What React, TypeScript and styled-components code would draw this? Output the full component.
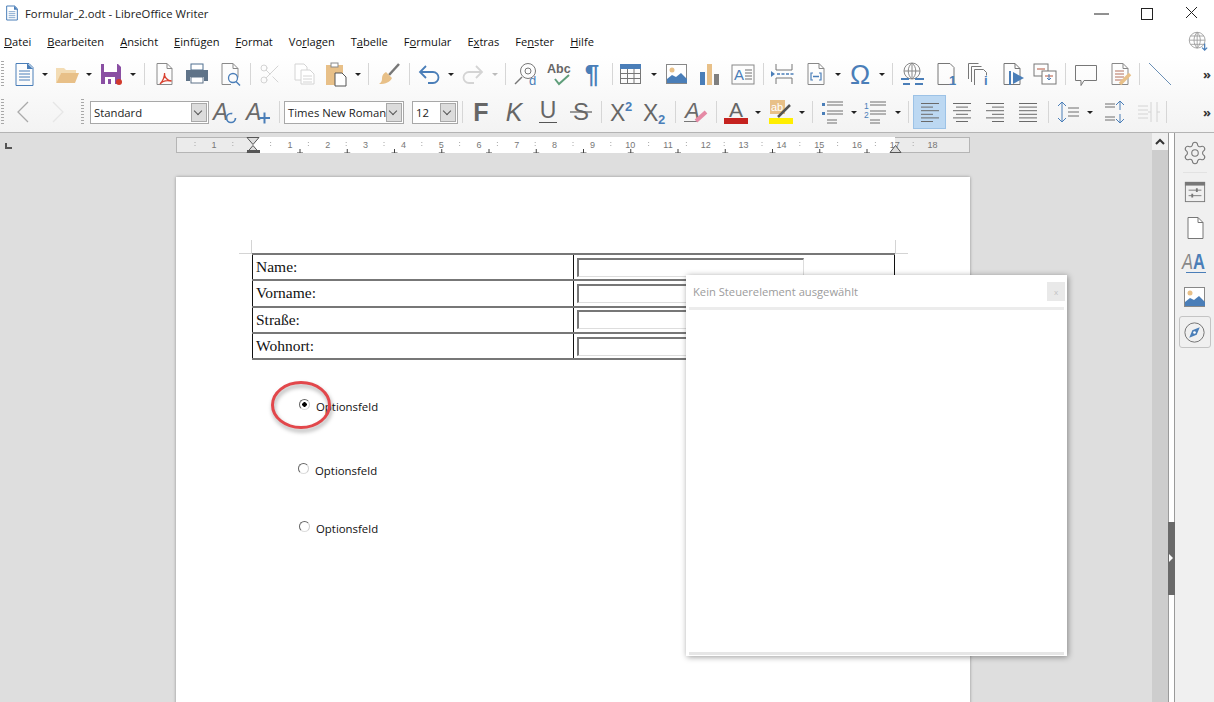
import React from "react";
import styled, { createGlobalStyle } from "styled-components";
import { Settings, Scissors } from "lucide-react";

const BLUE = "#4a7eb8";
const GREY = "#6f6f6f";
const TAN = "#e8c088";
const PALE = "#d4d4d4";

const Global = createGlobalStyle`
html, body { margin: 0; padding: 0; background: #fff; }
body { font-family: "Open Sans", "Noto Sans", sans-serif; }
`;

const Ico = styled.svg.attrs<{ $s?: number }>((p) => ({
    viewBox: "0 0 24 24",
    width: p.$s || 24,
    height: p.$s || 24,
    fill: "none",
    stroke: GREY,
    strokeWidth: 1,
}))<{ $s?: number }>`
display: block;
flex: none;
overflow: visible;
font-family: "Liberation Sans", sans-serif;
`;

const Lines = ({ x, y, w, n, gap = 3, color = GREY }: { x: number; y: number; w: number; n: number; gap?: number; color?: string }) => (
    <path stroke={color} d={Array.from({ length: n }, (_, i) => `M${x} ${y + i * gap}h${w}`).join("")} />
);

const NewDoc = () => (
    <Ico>
        <path stroke={BLUE} d="M4 1.500h13l4 4v18H4z" />
        <path fill={BLUE} stroke="none" d="M15 1l6 6h-6z" />
        <Lines x={7} y={9} w={11} n={4} color={BLUE} />
    </Ico>
);
const Folder = () => (
    <Ico>
        <path fill="#f3dcb4" stroke="none" d="M1 21V6h8l2 2h10v3H6L3 21z" />
        <path fill={TAN} stroke="none" d="M6 11h18l-4 10H1.500z" />
    </Ico>
);
const Save = () => (
    <Ico>
        <path fill="#8a4fa3" stroke="none" d="M2 2h17l3 3v17H2z" />
        <rect x="5" y="2" width="13" height="8" fill="#fff" stroke="none" />
        <rect x="6" y="15" width="10" height="7" fill="#fff" stroke="none" />
        <rect x="9" y="17" width="3" height="5" fill="#8a4fa3" stroke="none" />
        <circle cx="20" cy="20" r="3" fill="#d23a2c" stroke="none" />
    </Ico>
);
const Pdf = () => (
    <Ico>
        <path d="M5 1.500h10l5 5v16H5z" stroke="#8a8a8a" />
        <path d="M15 1.500v5h5" stroke="#8a8a8a" />
        <path stroke="#d9402f" strokeWidth="1.300" d="M8 22c3-3 5-8 4.500-11-.5 4 3 8 7 8-4-1-9 0-11.500 3z" />
    </Ico>
);
const Printer = () => (
    <Ico>
        <rect x="6" y="2" width="12" height="6" fill="#fff" stroke="#4f6f8f" />
        <path fill="#5f7388" stroke="none" d="M1 8h22v11h-4v-4H5v4H1z" />
        <rect x="6" y="15" width="12" height="6" fill="#fff" stroke="#5f7388" />
    </Ico>
);
const Preview = () => (
    <Ico>
        <path stroke="#8a8a8a" d="M4 1.500h11l5 5v9M13 22.500H4v-21M15 1.500v5h5" />
        <circle cx="15" cy="16" r="4.500" stroke={BLUE} strokeWidth="1.300" />
        <path stroke={BLUE} strokeWidth="1.500" d="M18 19.500l4 4" />
    </Ico>
);
const Copy = () => (
    <Ico>
        <path stroke={PALE} fill="#fff" d="M3 2h9l3 3v13H3z" />
        <path stroke={PALE} fill="#fff" d="M9 8h9l4 4v10H9z" />
        <Lines x={11} y={14} w={9} n={3} color={PALE} />
    </Ico>
);
const Paste = () => (
    <Ico>
        <rect x="2" y="3" width="17" height="20" fill={TAN} stroke="none" />
        <rect x="7" y="1" width="7" height="4" fill="#fff" stroke="#8a8a8a" />
        <path fill="#fff" stroke="#555" d="M11 11h7l4 4v9H11z" />
    </Ico>
);
const Broom = () => (
    <Ico>
        <path stroke="#777" strokeWidth="2.500" d="M22 2L12 13" />
        <path fill={TAN} stroke="none" d="M9 10l6 6c-2 4-6 6-13 6 3-2 3-4 3-6 0-3 2-5 4-6z" />
    </Ico>
);
const Undo = ({ off }: { off?: boolean }) => (
    <Ico>
        <path
            stroke={off ? PALE : BLUE}
            strokeWidth="1.800"
            d={off ? "M15 4l6 6-6 6M21 10H8a4.500 4.500 0 0 0 0 11h5" : "M9 4L3 10l6 6M3 10h13a4.500 4.500 0 0 1 0 11h-5"}
        />
    </Ico>
);
const Find = () => (
    <Ico>
        <circle cx="14" cy="9" r="7.500" stroke="#777" />
        <circle cx="14" cy="9" r="3" stroke="#777" />
        <path stroke="#777" strokeWidth="1.500" d="M8 15l-7 7" />
        <text x="15" y="23" fontSize="13" fill={BLUE} stroke="none">d</text>
    </Ico>
);
const Spell = () => (
    <Ico>
        <text x="0" y="11" fontSize="12.500" fontWeight="700" fill="#666" stroke="none">Abc</text>
        <path stroke="#5f9e7a" strokeWidth="2" d="M8 17l4 5 10-9" />
    </Ico>
);
const Pilcrow = () => (
    <Ico>
        <text x="12" y="21" textAnchor="middle" fontSize="26" fontWeight="700" fill={BLUE} stroke="none">¶</text>
    </Ico>
);
const TableIco = () => (
    <Ico>
        <rect x="1.500" y="2.500" width="20" height="19" stroke="#777" />
        <rect x="1" y="2" width="21" height="5" fill={BLUE} stroke="none" />
        <path stroke="#777" d="M1.500 11.500h20M1.500 16.500h20M8.500 7v14M15 7v14" />
    </Ico>
);
const Picture = () => (
    <Ico>
        <rect x="1.500" y="2.500" width="20" height="19" stroke="#888" fill="#fff" />
        <circle cx="7" cy="8" r="2.500" fill={TAN} stroke="none" />
        <path fill={BLUE} stroke="none" d="M2 21v-4l5-4 4 2 5-4 6 6v4z" />
    </Ico>
);
const Chart = () => (
    <Ico>
        <rect x="2" y="10" width="5" height="13" fill={BLUE} stroke="none" />
        <rect x="9" y="2" width="5" height="21" fill={TAN} stroke="none" />
        <rect x="16" y="12" width="5" height="11" fill="#808080" stroke="none" />
    </Ico>
);
const TextBox = () => (
    <Ico>
        <rect x="1" y="3" width="22" height="19" stroke="#888" />
        <text x="3" y="18" fontSize="15" fill={BLUE} stroke="none">A</text>
        <Lines x={14} y={8} w={7} n={4} />
    </Ico>
);
const PageBreak = () => (
    <Ico>
        <path stroke="#777" d="M5 2v6h16V2M5 22v-6h16v6" />
        <path stroke={BLUE} strokeWidth="1.500" strokeDasharray="3 1.500" d="M6 12h18" />
        <path fill={BLUE} stroke="none" d="M0 9l4 3-4 3z" />
    </Ico>
);
const FieldIco = () => (
    <Ico>
        <path stroke="#888" d="M4 1.500h11l5 5v16H4zM15 1.500v5h5" />
        <path stroke={BLUE} strokeWidth="1.200" d="M9 11H7v7h2M15 11h2v7h-2" />
        <path stroke={BLUE} strokeWidth="1.500" d="M9 14.500h6" />
    </Ico>
);
const Omega = () => (
    <Ico>
        <text x="12" y="22" textAnchor="middle" fontSize="27" fill={BLUE} stroke="none">Ω</text>
    </Ico>
);
const Hyperlink = () => (
    <Ico>
        <circle cx="11" cy="9" r="8" stroke="#888" />
        <path stroke="#888" d="M3 9h16M11 1v16M11 1c-5 4-5 12 0 16M11 1c5 4 5 12 0 16" />
        <path stroke={BLUE} strokeWidth="2" d="M0 17h8M14 17h9M2 22h7M14 22h8" />
    </Ico>
);
const Footnote = () => (
    <Ico>
        <path stroke="#777" d="M3 1.500h12l4 4v17H3z" />
        <text x="14" y="23" fontSize="13" fontWeight="700" fill={BLUE} stroke="none">1</text>
    </Ico>
);
const Endnote = () => (
    <Ico>
        <path stroke="#777" d="M1.500 17V1.500h10M4.500 20V4.500h10M7.500 23V7.500h9l3 3v3" />
        <text x="17" y="23" fontSize="13" fontWeight="700" fill={BLUE} stroke="none">i</text>
    </Ico>
);
const Bookmark = () => (
    <Ico>
        <path stroke="#777" d="M3 1.500h11l5 5v16H3zM14 1.500v5h5" />
        <path stroke={BLUE} strokeWidth="2" d="M9 9v14" />
        <path fill={BLUE} stroke="none" d="M12 10l11 6-11 6z" />
    </Ico>
);
const CrossRef = () => (
    <Ico>
        <rect x="1" y="2" width="14" height="12" stroke="#777" />
        <rect x="9" y="9" width="14" height="13" fill="#fff" stroke="#777" />
        <path stroke="#b5543c" d="M4 7h8M12 14h8" />
        <path stroke={BLUE} d="M16 12v6l-2-2M16 18l2-2" />
    </Ico>
);
const Comment = () => (
    <Ico>
        <path stroke="#777" d="M1.500 3.500h21v15H10l-3 5v-5H1.500z" />
    </Ico>
);
const Track = () => (
    <Ico>
        <path stroke="#888" d="M4 1.500h11l5 5v16H4zM15 1.500v5h5" />
        <Lines x={7} y={9} w={9} n={4} color="#b5705c" />
        <path stroke={TAN} strokeWidth="3.500" d="M12 22l10-10" />
    </Ico>
);
const LineIco = () => (
    <Ico>
        <path stroke="#6a8fb5" d="M1 1l22 22" />
    </Ico>
);
const Chevron = ({ off }: { off?: boolean }) => (
    <Ico>
        <path stroke={off ? "#e6e6e6" : "#aaa"} strokeWidth="1.300" d={off ? "M8 2l10 10L8 22" : "M16 2L6 12l10 10"} />
    </Ico>
);
const StyleA = () => (
    <Ico>
        <text x="-1" y="20" fontSize="23" fontStyle="italic" fill="#6a6a6a" stroke="none">A</text>
        <circle cx="17" cy="18" r="4.500" stroke={BLUE} strokeWidth="1.700" strokeDasharray="22 6" />
    </Ico>
);
const StyleNew = () => (
    <Ico>
        <text x="-1" y="20" fontSize="23" fontStyle="italic" fill="#6a6a6a" stroke="none">A</text>
        <path stroke={BLUE} strokeWidth="2" d="M12 18h11M17.500 12.500v11" />
    </Ico>
);
const Glyph = ({ t: label, italic, bold }: { t: string; italic?: boolean; bold?: boolean }) => (
    <Ico>
        <text x="12" y="21" textAnchor="middle" fontSize="25" fontStyle={italic ? "italic" : "normal"} fontWeight={bold ? 700 : 400} fill="#666" stroke="none">{label}</text>
    </Ico>
);
const Under = () => (
    <Ico>
        <text x="12" y="18" textAnchor="middle" fontSize="23" fill="#666" stroke="none">U</text>
        <path stroke="#555" d="M3 22.500h18" />
    </Ico>
);
const Strike = () => (
    <Ico>
        <text x="12" y="20" textAnchor="middle" fontSize="24" fill="#666" stroke="none">S</text>
        <path stroke="#666" strokeWidth="1.300" d="M1 12h22" />
    </Ico>
);
const Script = ({ up }: { up?: boolean }) => (
    <Ico>
        <text x="0" y="21" fontSize="23" fill="#666" stroke="none">X</text>
        <text x="15" y={up ? 11 : 24} fontSize="13" fontWeight="700" fill={BLUE} stroke="none">2</text>
    </Ico>
);
const ClearFmt = () => (
    <Ico>
        <text x="1" y="18" fontSize="22" fontStyle="italic" fill="#6a6a6a" stroke="none">A</text>
        <path stroke="#777" d="M0 21.500h14" />
        <path stroke="#e58aa5" strokeWidth="4" d="M12 21l10-9" />
    </Ico>
);
const FontColor = () => (
    <Ico>
        <text x="12" y="17" textAnchor="middle" fontSize="21" fill="#666" stroke="none">A</text>
        <rect x="0" y="18" width="24" height="6" fill="#c5221f" stroke="none" />
    </Ico>
);
const Highlight = () => (
    <Ico>
        <rect x="1" y="0" width="15" height="14" fill={TAN} stroke="none" />
        <text x="2" y="11" fontSize="11" fill="#fff" stroke="none">ab</text>
        <path stroke="#555" strokeWidth="2.500" d="M9 17l12-12" />
        <rect x="0" y="18" width="24" height="6" fill="#ffee00" stroke="none" />
    </Ico>
);
const Bullets = () => (
    <Ico>
        <path fill={BLUE} stroke="none" d="M1 3h3v3H1zM1 12h3v3H1z" />
        <Lines x={6} y={2} w={16} n={2} gap={3} />
        <Lines x={6} y={11} w={16} n={2} gap={3} />
        <Lines x={6} y={20} w={10} n={2} gap={3} />
    </Ico>
);
const Numbers = () => (
    <Ico>
        <text x="0" y="9" fontSize="8.500" fill={BLUE} stroke="none">1</text>
        <text x="0" y="18" fontSize="8.500" fill={BLUE} stroke="none">2</text>
        <Lines x={6} y={2} w={16} n={2} gap={3} />
        <Lines x={6} y={11} w={16} n={2} gap={3} />
        <Lines x={6} y={20} w={10} n={2} gap={3} />
    </Ico>
);
const Align = ({ kind }: { kind: "l" | "c" | "r" | "j" }) => {
    const rows = [18, 12, 18, 12, 18, 12];
    return (
        <Ico>
            <path
                stroke="#6a6a6a"
                d={rows
                    .map((w, i) => {
                        const len = kind === "j" ? 18 : w;
                        const x = kind === "l" || kind === "j" ? 3 : kind === "c" ? 12 - len / 2 : 21 - len;
                        return `M${x} ${3.5 + i * 3.6}h${len}`;
                    })
                    .join("")}
            />
        </Ico>
    );
};
const Spacing = () => (
    <Ico>
        <path stroke={BLUE} d="M6 2v20M2 6l4-4 4 4M2 18l4 4 4-4" />
        <Lines x={12} y={8} w={11} n={3} gap={4} />
    </Ico>
);
const ParaSpace = () => (
    <Ico>
        <path stroke={BLUE} d="M17 1v9M13 5l4-4 4 4M17 14v9M13 19l4 4 4-4" />
        <Lines x={2} y={4} w={10} n={2} gap={3} />
        <Lines x={2} y={17} w={10} n={2} gap={3} />
    </Ico>
);
const ParaOff = () => (
    <Ico>
        <Lines x={2} y={6} w={10} n={4} gap={4} color={PALE} />
        <path stroke={PALE} d="M15 2v20M21 2v20M12 12h3M24 12h-3" />
    </Ico>
);
const WebGlobe = () => (
    <Ico $s={20}>
        <circle cx="11" cy="11" r="9.500" stroke="#999" />
        <path stroke="#999" d="M1.500 11h19M11 1.500v19M11 1.500c-5 5-5 14 0 19M11 1.500c5 5 5 14 0 19M3 6h16M3 16h16" />
        <path stroke={BLUE} strokeWidth="1.500" d="M20 15v8M17 20l3 3 3-3" />
    </Ico>
);
const Deck = () => (
    <Ico $s={22}>
        <rect x="1.500" y="1.500" width="21" height="21" stroke="#777" />
        <rect x="1" y="1" width="22" height="4" fill="#777" stroke="none" />
        <path stroke="#777" d="M5 10h14M5 16h14" />
        <path stroke="#777" strokeWidth="2" d="M14 8v4M9 14v4" />
    </Ico>
);
const PageIco = () => (
    <Ico>
        <path stroke="#777" fill="#fff" d="M5 1.500h10l5 5v16H5z" />
        <path stroke="#777" d="M15 1.500v5h5" />
    </Ico>
);
const StyleSide = () => (
    <Ico>
        <text transform="translate(-1 19) scale(.75 1)" fontSize="22" fontStyle="italic" fill="#888" stroke="none">A</text>
        <text transform="translate(10 19) scale(.75 1)" fontSize="22" fontWeight="700" fill={BLUE} stroke="none">A</text>
        <path stroke={BLUE} d="M3 22.500h20" />
    </Ico>
);
const CompassIco = () => (
    <Ico $s={21}>
        <circle cx="12" cy="12" r="11" stroke="#666" />
        <path fill={BLUE} stroke="none" d="M18 6l-3.500 8.500L6 18l3.500-8.500z" />
        <circle cx="12" cy="12" r="1.500" fill="#fff" stroke="none" />
    </Ico>
);
const DocLogo = () => (
    <Ico $s={16}>
        <path stroke={BLUE} strokeWidth="1.500" fill="#fff" d="M4 1.500h12l4 4v17H4z" />
        <path fill={BLUE} stroke="none" d="M15 1l6 6h-6z" />
        <Lines x={7} y={10} w={10} n={4} color={BLUE} />
    </Ico>
);

type Item = { c: number; w: number; el: React.ReactNode };

// gap before each item comes from the centre of the one before it
const ToolRow = ({ items }: { items: Item[] }) => (
    <>
        {items.map((it, i) => {
            const prev = items[i - 1];
            const gap = prev ? it.c - prev.c - (it.w + prev.w) / 2 : it.c - it.w / 2;
            return (
                <Slot key={i} $w={it.w} $gap={gap}>
                    {it.el}
                </Slot>
            );
        })}
    </>
);

const t = (c: number, el: React.ReactNode, w = 24): Item => ({ c, w, el });
const dd = (c: number, off?: boolean): Item => ({ c, w: 6, el: <Caret $off={off} /> });
const sep = (c: number): Item => ({ c, w: 1, el: <Sep /> });
const more = (c: number): Item => ({ c, w: 12, el: <More>»</More> });

const bar1 = (): Item[] => [
    t(2, <Grip />, 3),
    t(24, <NewDoc />),
    dd(45),
    t(67, <Folder />),
    dd(89),
    t(111, <Save />),
    dd(133),
    sep(144),
    t(164, <Pdf />),
    t(197, <Printer />),
    t(230, <Preview />),
    sep(250),
    t(270, <Scissors size={24} color={PALE} strokeWidth={1} />),
    t(304, <Copy />),
    t(336, <Paste />),
    dd(358),
    sep(368),
    t(389, <Broom />),
    sep(409),
    t(429, <Undo />),
    dd(451),
    t(473, <Undo off />),
    dd(495, true),
    sep(505),
    t(526, <Find />),
    t(559, <Spell />),
    t(592, <Pilcrow />),
    sep(612),
    t(631, <TableIco />),
    dd(654),
    t(677, <Picture />),
    t(710, <Chart />),
    t(743, <TextBox />),
    sep(763),
    t(783, <PageBreak />),
    t(816, <FieldIco />),
    dd(838),
    t(860, <Omega />),
    dd(882),
    sep(892),
    t(913, <Hyperlink />),
    t(947, <Footnote />),
    t(979, <Endnote />),
    t(1013, <Bookmark />),
    t(1045, <CrossRef />),
    sep(1065),
    t(1086, <Comment />),
    t(1120, <Track />),
    sep(1139),
    t(1160, <LineIco />),
    more(1207),
];

const bar2 = (): Item[] => [
    t(2, <Grip />, 3),
    t(24, <Chevron />),
    t(57, <Chevron off />),
    t(82, <Grip />, 3),
    t(149.5, <Combo $w={119}><span>Standard</span><ComboBtn /></Combo>, 119),
    t(226, <StyleA />),
    t(259, <StyleNew />),
    sep(279),
    t(344, <Combo $w={120}><span>Times New Roman</span><ComboBtn /></Combo>, 120),
    t(435, <Combo $w={46}><span>12</span><ComboBtn /></Combo>, 46),
    sep(462),
    t(481, <Glyph t="F" bold />),
    t(514, <Glyph t="K" italic />),
    t(548, <Under />),
    t(581, <Strike />),
    sep(601),
    t(622, <Script up />),
    t(655, <Script />),
    sep(675),
    t(696, <ClearFmt />),
    sep(716),
    t(736, <FontColor />),
    dd(758),
    t(781, <Highlight />),
    dd(802),
    sep(812),
    t(833, <Bullets />),
    dd(854),
    t(876, <Numbers />),
    dd(898),
    sep(908),
    t(929.5, <Active><Align kind="l" /></Active>, 33),
    t(962, <Align kind="c" />),
    t(995, <Align kind="r" />),
    t(1028, <Align kind="j" />),
    sep(1048),
    t(1068, <Spacing />),
    dd(1090),
    t(1115, <ParaSpace />),
    t(1148, <ParaOff />),
    sep(1166),
    more(1207),
];

const menus: [string, string, string][] = [
    ["", "D", "atei"],
    ["", "B", "earbeiten"],
    ["", "A", "nsicht"],
    ["", "E", "infügen"],
    ["", "F", "ormat"],
    ["Vo", "r", "lagen"],
    ["T", "a", "belle"],
    ["F", "o", "rmular"],
    ["E", "x", "tras"],
    ["Fe", "n", "ster"],
    ["", "H", "ilfe"],
];

const rows = ["Name:", "Vorname:", "Straße:", "Wohnort:"];
const PX_CM = 37.8;

const Ruler = () => (
    <RulerSvg>
        <rect x="0.500" y="0.500" width="793" height="15" fill="#ebebeb" stroke="#b5b5b5" />
        <rect x="77" y="0" width="642" height="16" fill="#fff" />
        <text x="38" y="11" fontSize="9" fill="#777" textAnchor="middle">1</text>
        {Array.from({ length: 18 }, (_, i) => (
            <text key={i} x={114 + PX_CM * i} y="11" fontSize="9" fill="#777" textAnchor="middle">{i + 1}</text>
        ))}
        {Array.from({ length: 20 }, (_, i) => (
            <path key={i} stroke="#aaa" strokeDasharray="1 2" d={`M${19 + PX_CM * i} 5v6`} />
        ))}
        {Array.from({ length: 13 }, (_, i) => (
            <path key={i} stroke="#444" d={`M${124 + 47.25 * i} 12v4M${121 + 47.25 * i} 16h6`} />
        ))}
        <path stroke="#555" fill="#ddd" d="M71 0.500h12l-6 7zM71 15.500h12l-6-7z" />
        <path fill="#555" d="M71 16h13v-3h-13z" />
        <path stroke="#555" fill="#ddd" d="M714 15.500h11l-5.500-7z" />
    </RulerSvg>
);

const Circle = styled.svg.attrs({ viewBox: "0 0 76 66", width: 76, height: 66 })`
position: absolute;
left: 265px;
top: 374px;
filter: drop-shadow(1px 3px 2px rgba(0, 0, 0, 0.35));
`;

const PanelBody = styled.div`
flex: 1;
background: #fff;
border-top: 3px solid #ececec;
border-bottom: 3px solid #e6e6e6;
margin: 0 3px 1px;
`;

const PanelClose = styled.div`
width: 18px;
height: 19px;
background: #e9e9e9;
color: #c4c4c4;
font-size: 8px;
display: flex;
align-items: center;
justify-content: center;
`;

const PanelTitle = styled.div`
font-size: 11.2px;
color: #9c9c9c;
`;

const PanelHead = styled.div`
height: 32px;
display: flex;
align-items: center;
justify-content: space-between;
padding: 0 2px 0 7px;
`;

const Panel = styled.div`
position: absolute;
left: 686px;
top: 275px;
width: 381px;
height: 381px;
background: #fff;
display: flex;
flex-direction: column;
box-sizing: border-box;
box-shadow: 1px 1px 6px rgba(0, 0, 0, 0.4);
`;

const SideActive = styled.div`
width: 32px;
height: 32px;
margin-top: 1px;
border: 1px solid #c4c4c4;
border-radius: 3px;
box-sizing: border-box;
display: flex;
align-items: center;
justify-content: center;
`;

const SideSep = styled.div`
width: 24px;
height: 1px;
background: #e2e2e2;
`;

const SideSlot = styled.div<{ $h: number }>`
height: ${(p) => p.$h}px;
display: flex;
align-items: center;
justify-content: center;
`;

const Side = styled.div`
width: 39px;
background: #f0f0f0;
display: flex;
flex-direction: column;
align-items: center;
`;

const SplitHandle = styled.div`
position: absolute;
left: -1px;
top: 389px;
width: 7px;
height: 73px;
background: #696969;
&::after {
    content: "";
    position: absolute;
    left: 1px;
    top: 32px;
    border-left: 4px solid #fff;
    border-top: 4px solid transparent;
    border-bottom: 4px solid transparent;
}
`;

const Split = styled.div`
position: relative;
width: 5px;
background: #fff;
border-left: 1px solid #9a9a9a;
border-right: 1px solid #9a9a9a;
`;

const ScrollUp = styled.div`
height: 17px;
background: #f0f0f0;
display: flex;
align-items: center;
justify-content: center;
`;

const Scroll = styled.div`
width: 16px;
background: #cdcdcd;
`;

const OptionText = styled.div`
font-size: 11.4px;
line-height: 18px;
color: #111;
margin-left: 6px;
font-family: "Open Sans", sans-serif;
`;

const Radio = styled.div<{ $on?: boolean }>`
width: 11px;
height: 11px;
margin-top: 1px;
box-sizing: border-box;
border-radius: 50%;
border: 1px solid;
border-color: #666 #ccc #ddd #666;
background: ${(p) => (p.$on ? "radial-gradient(circle, #000 0 2px, #fff 2.5px)" : "#fff")};
`;

const Option = styled.div<{ $left: number; $top: number }>`
display: flex;
align-items: flex-start;
margin-left: ${(p) => p.$left}px;
margin-top: ${(p) => p.$top}px;
`;

const Field = styled.div`
width: 227px;
height: 19px;
box-sizing: border-box;
border-style: solid;
border-width: 2px 1px 1px 2px;
border-color: #777 #ddd #ddd #777;
background: #fff;
`;

const FieldCell = styled.td`
border-style: solid;
border-width: 2px 1px;
border-color: #777 #111;
padding: 1px 3px;
`;

const LabelCell = styled.td`
width: 321px;
height: 26.3px;
box-sizing: border-box;
padding: 0 3px;
border-style: solid;
border-width: 2px 1px;
border-color: #777 #111;
font-size: 15.5px;
font-family: "Liberation Serif", serif;
color: #111;
`;

const FormTable = styled.table`
width: 643px;
border-collapse: collapse;
table-layout: fixed;
`;

const Mark = styled.div<{ $right?: boolean }>`
width: 13px;
height: 14px;
box-sizing: border-box;
border-bottom: 1px solid #d4d4d4;
${(p) => (p.$right ? "border-left: 1px solid #d4d4d4; margin-right: -13px;" : "border-right: 1px solid #d4d4d4; margin-left: -13px;")}
`;

const MarkRow = styled.div`
width: 643px;
height: 13px;
display: flex;
justify-content: space-between;
`;

const Page = styled.div`
width: 794px;
height: 560px;
margin-left: 176px;
margin-top: 24px;
padding: 63px 0 0 76px;
box-sizing: border-box;
background: #fff;
box-shadow: 0 0 3px rgba(0, 0, 0, 0.35);
`;

const RulerSvg = styled.svg.attrs({ viewBox: "0 0 794 16", width: 794, height: 16 })`
display: block;
font-family: "Liberation Sans", sans-serif;
`;

const Corner = styled.div`
position: absolute;
left: 5px;
top: 10px;
width: 5px;
height: 4px;
border-left: 2px solid #555;
border-bottom: 2px solid #555;
`;

const RulerRow = styled.div`
position: relative;
padding: 4px 0 0 176px;
`;

const Main = styled.div`
flex: 1;
min-width: 0;
overflow: hidden;
background: #dedede;
`;

const Work = styled.div`
flex: 1;
min-height: 0;
display: flex;
border-top: 1px solid #b4b4b4;
`;

const More = styled.div`
font-size: 13px;
font-weight: 700;
color: #333;
line-height: 1;
`;

const Sep = styled.div`
width: 1px;
height: 22px;
background: #d6d6d6;
`;

const Caret = styled.div<{ $off?: boolean }>`
width: 0;
height: 0;
border-left: 3px solid transparent;
border-right: 3px solid transparent;
border-top: 3px solid ${(p) => (p.$off ? "#bbb" : "#222")};
`;

const Active = styled.div`
width: 33px;
height: 34px;
background: #bcd8f2;
border: 1px solid #9cc2e6;
box-sizing: border-box;
display: flex;
align-items: center;
justify-content: center;
`;

const ComboBtn = styled.div`
position: absolute;
right: 1px;
top: 1px;
bottom: 1px;
width: 16px;
background: #dcdcdc;
border: 1px solid #a8a8a8;
box-sizing: border-box;
&::after {
    content: "";
    position: absolute;
    left: 3px;
    top: 4px;
    width: 5px;
    height: 5px;
    border-right: 1px solid #555;
    border-bottom: 1px solid #555;
    transform: rotate(45deg);
}
`;

const Combo = styled.div<{ $w: number }>`
position: relative;
width: ${(p) => p.$w}px;
height: 23px;
box-sizing: border-box;
border: 1px solid #a8a8a8;
background: #fff;
font-size: 11.3px;
line-height: 21px;
padding-left: 3px;
color: #222;
white-space: nowrap;
overflow: hidden;
`;

const Grip = styled.div`
width: 3px;
height: 26px;
background: repeating-linear-gradient(#a8a8a8 0 1px, transparent 1px 3px);
`;

const Slot = styled.div<{ $w: number; $gap: number }>`
flex: none;
width: ${(p) => p.$w}px;
margin-left: ${(p) => p.$gap}px;
display: flex;
align-items: center;
justify-content: center;
`;

const Toolbar = styled.div<{ $h: number }>`
height: ${(p) => p.$h}px;
display: flex;
align-items: center;
`;

const MenuItem = styled.div`
font-size: 11.1px;
color: #111;
white-space: nowrap;
`;

const MenuList = styled.div`
display: flex;
gap: 16px;
`;

const MenuBar = styled.div`
height: 30px;
display: flex;
align-items: center;
justify-content: space-between;
padding: 0 6px 0 4px;
`;

const WinIco = styled.svg.attrs({ viewBox: "0 0 17 17", width: 17, height: 17 })`
display: block;
`;

const WinBtns = styled.div`
margin-left: auto;
display: flex;
gap: 28px;
padding-right: 14px;
`;

const TitleText = styled.div`
font-size: 11.3px;
color: #222;
margin-left: 5px;
`;

const TitleBar = styled.div`
height: 26px;
display: flex;
align-items: center;
padding-left: 4px;
box-sizing: border-box;
`;

const Head = styled.div`
background: linear-gradient(#fff 0, #fff 56px, #f3f3f3 100%);
`;

const Root = styled.div`
position: relative;
width: 1214px;
height: 702px;
overflow: hidden;
display: flex;
flex-direction: column;
background: #fff;
`;

const App = () => {
    return (
        <>
            <Global />
            <Root>
                <Head>
                    <TitleBar>
                        <DocLogo />
                        <TitleText>Formular_2.odt - LibreOffice Writer</TitleText>
                        <WinBtns>
                            <WinIco><path d="M1 9h15" stroke="#222" /></WinIco>
                            <WinIco><rect x="3.500" y="3.500" width="11" height="11" stroke="#222" fill="none" /></WinIco>
                            <WinIco><path d="M3 2l11 11M14 2L3 13" stroke="#222" /></WinIco>
                        </WinBtns>
                    </TitleBar>
                    <MenuBar>
                        <MenuList>
                            {menus.map(([a, u, b]) => (
                                <MenuItem key={a + u + b}>
                                    {a}
                                    <u>{u}</u>
                                    {b}
                                </MenuItem>
                            ))}
                        </MenuList>
                        <WebGlobe />
                    </MenuBar>
                    <Toolbar $h={36}>
                        <ToolRow items={bar1()} />
                    </Toolbar>
                    <Toolbar $h={40}>
                        <ToolRow items={bar2()} />
                    </Toolbar>
                </Head>

                <Work>
                    <Main>
                        <RulerRow>
                            <Corner />
                            <Ruler />
                        </RulerRow>
                        <Page>
                            <MarkRow>
                                <Mark />
                                <Mark $right />
                            </MarkRow>
                            <FormTable>
                                <tbody>
                                    {rows.map((r) => (
                                        <tr key={r}>
                                            <LabelCell>{r}</LabelCell>
                                            <FieldCell>
                                                <Field />
                                            </FieldCell>
                                        </tr>
                                    ))}
                                </tbody>
                            </FormTable>
                            <Option $left={47} $top={38}>
                                <Radio $on />
                                <OptionText>Optionsfeld</OptionText>
                            </Option>
                            <Option $left={46} $top={46}>
                                <Radio />
                                <OptionText>Optionsfeld</OptionText>
                            </Option>
                            <Option $left={47} $top={40}>
                                <Radio />
                                <OptionText>Optionsfeld</OptionText>
                            </Option>
                        </Page>
                    </Main>

                    <Scroll>
                        <ScrollUp>
                            <svg width="12" height="8" viewBox="0 0 12 8">
                                <path d="M2 6l4-4 4 4" fill="none" stroke="#333" strokeWidth="2" />
                            </svg>
                        </ScrollUp>
                    </Scroll>
                    <Split>
                        <SplitHandle />
                    </Split>
                    <Side>
                        <SideSlot $h={39}>
                            <Settings size={26} color="#777" strokeWidth={1} />
                        </SideSlot>
                        <SideSep />
                        <SideSlot $h={38}><Deck /></SideSlot>
                        <SideSlot $h={34}><PageIco /></SideSlot>
                        <SideSlot $h={33}><StyleSide /></SideSlot>
                        <SideSlot $h={37}><Picture /></SideSlot>
                        <SideActive><CompassIco /></SideActive>
                    </Side>
                </Work>

                <Panel>
                    <PanelHead>
                        <PanelTitle>Kein Steuerelement ausgewählt</PanelTitle>
                        <PanelClose>x</PanelClose>
                    </PanelHead>
                    <PanelBody />
                </Panel>

                <Circle>
                    <ellipse cx="36" cy="31" rx="28.500" ry="22.500" fill="none" stroke="#e2474b" strokeWidth="3" />
                </Circle>
            </Root>
        </>
    );
};

export default App;
